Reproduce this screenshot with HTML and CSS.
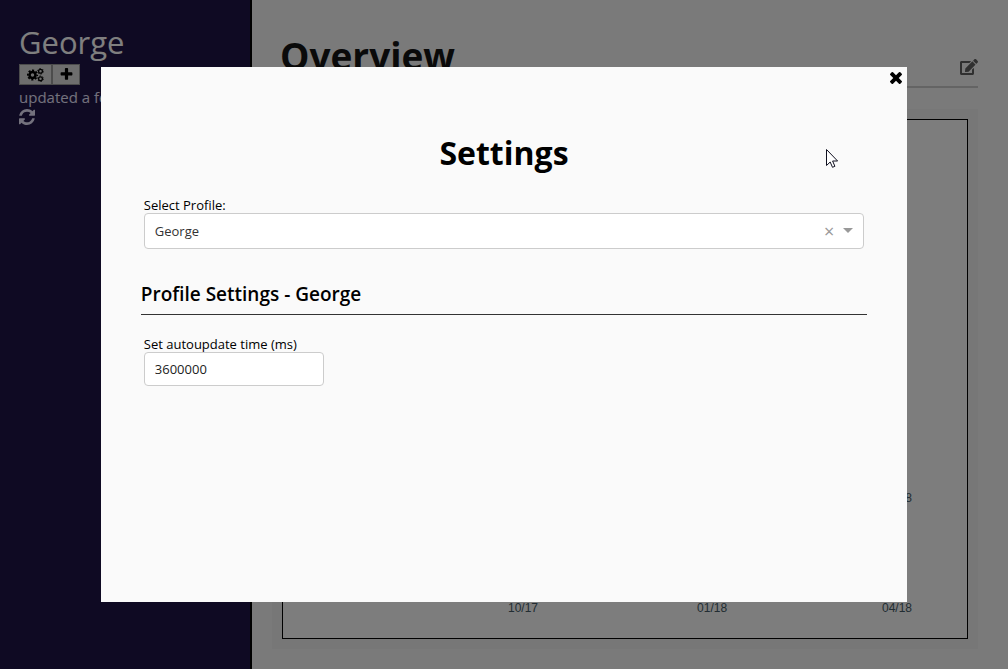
FILE: index.html
```html
<!DOCTYPE html>
<html lang="en">
<head>
<meta charset="utf-8">
<title>Overview</title>
<link rel="stylesheet" href="styles.css">
</head>
<body>
<div class="app">
  <aside class="sidebar">
    <h2 class="profile-name">George</h2>
    <div class="profile-actions">
      <button class="tool-button" type="button" aria-label="Settings">
        <svg class="icon-cogs" viewBox="0 0 34 28">
          <circle cx="11" cy="14" r="6" fill="none" stroke="currentColor" stroke-width="5"/>
          <circle cx="11" cy="14" r="9.400" fill="none" stroke="currentColor" stroke-width="3.600" stroke-dasharray="4.200 3.180" stroke-dashoffset="2.100"/>
          <circle cx="27" cy="6.500" r="3.800" fill="none" stroke="currentColor" stroke-width="2.600"/>
          <circle cx="27" cy="6.500" r="5.700" fill="none" stroke="currentColor" stroke-width="1.800" stroke-dasharray="2.900 3.070"/>
          <circle cx="27" cy="21.500" r="3.800" fill="none" stroke="currentColor" stroke-width="2.600"/>
          <circle cx="27" cy="21.500" r="5.700" fill="none" stroke="currentColor" stroke-width="1.800" stroke-dasharray="2.900 3.070"/>
        </svg>
      </button>
      <button class="tool-button tool-button-add" type="button" aria-label="Add profile">
        <svg class="icon-plus" viewBox="0 0 1792 1792"><path fill="currentColor" d="M1600 736v192q0 40-28 68t-68 28h-416v416q0 40-28 68t-68 28h-192q-40 0-68-28t-28-68v-416h-416q-40 0-68-28t-28-68v-192q0-40 28-68t68-28h416v-416q0-40 28-68t68-28h192q40 0 68 28t28 68v416h416q40 0 68 28t28 68z"/></svg>
      </button>
    </div>
    <p class="updated">updated a few seconds ago</p>
    <button class="refresh" type="button" aria-label="Refresh">
      <svg class="icon-refresh" viewBox="128 128 1536 1536"><path fill="currentColor" d="M1639 1056q0 5-1 7-64 268-268 434.500t-478 166.500q-146 0-282.500-55t-243.500-157l-129 129q-19 19-45 19t-45-19-19-45v-448q0-26 19-45t45-19h448q26 0 45 19t19 45-19 45l-137 137q71 66 161 102t187 36q134 0 250-65t186-179q11-17 53-117 8-23 30-23h192q13 0 22.500 9.500t9.500 22.500zm25-800v448q0 26-19 45t-45 19h-448q-26 0-45-19t-19-45 19-45l138-138q-148-137-349-137-134 0-250 65t-186 179q-11 17-53 117-8 23-30 23h-199q-13 0-22.500-9.500t-9.500-22.500v-7q65-268 270-434.500t480-166.500q146 0 284 55.500t245 156.500l130-129q19-19 45-19t45 19 19 45z"/></svg>
    </button>
  </aside>
  <main class="content">
    <header class="page-header">
      <h1 class="page-title">Overview</h1>
      <button class="edit" type="button" aria-label="Edit">
        <svg class="icon-edit" viewBox="0 0 576 512"><path fill="currentColor" d="M402.600 83.200l90.200 90.200c3.800 3.800 3.800 10 0 13.800L274.400 405.600l-92.800 10.300c-12.400 1.400-22.900-9.100-21.500-21.500l10.300-92.800L388.800 83.200c3.800-3.800 10-3.800 13.800 0zm162-22.900l-48.800-48.800c-15.200-15.200-39.900-15.200-55.200 0l-35.400 35.400c-3.800 3.800-3.800 10 0 13.800l90.200 90.200c3.800 3.800 10 3.800 13.800 0l35.400-35.400c15.200-15.300 15.200-40 0-55.200zM384 346.200V448H64V128h229.800c3.200 0 6.200-1.300 8.500-3.500l40-40c7.600-7.600 2.200-20.500-8.500-20.500H48C21.500 64 0 85.500 0 112v352c0 26.500 21.500 48 48 48h352c26.500 0 48-21.500 48-48V306.200c0-10.700-12.900-16-20.500-8.500l-40 40c-2.200 2.300-3.500 5.300-3.500 8.500z"/></svg>
      </button>
    </header>
    <section class="panel">
      <div class="charts">
        <div class="axis"><span>10/17</span><span>01/18</span><span>04/18</span></div>
        <div class="axis"><span>10/17</span><span>01/18</span><span>04/18</span></div>
      </div>
    </section>
  </main>
</div>

<div class="overlay">
  <div class="modal" role="dialog" aria-modal="true" aria-labelledby="modal-title">
    <button class="close" type="button" aria-label="Close">
      <svg class="icon-close" viewBox="302 302 1188 1188"><path fill="currentColor" d="M1490 1258q0 40-28 68l-136 136q-28 28-68 28t-68-28l-294-294-294 294q-28 28-68 28t-68-28l-136-136q-28-28-28-68t28-68l294-294-294-294q-28-28-28-68t28-68l136-136q28-28 68-28t68 28l294 294 294-294q28-28 68-28t68 28l136 136q28 28 28 68t-28 68l-294 294 294 294q28 28 28 68z"/></svg>
    </button>
    <h1 class="modal-title" id="modal-title">Settings</h1>
    <div class="field">
      <label for="profile">Select Profile:</label>
      <div class="select-box">
        <select id="profile"><option>George</option></select>
        <button class="clear" type="button" aria-label="Clear">×</button>
        <svg class="arrow" viewBox="0 0 10 5"><path d="M0 0h10L5 5z" fill="#999"/></svg>
      </div>
    </div>
    <h2 class="section-title">Profile Settings - George</h2>
    <div class="field">
      <label for="interval">Set autoupdate time (ms)</label>
      <input class="text-input" id="interval" type="text" value="3600000">
    </div>
  </div>
</div>
<svg class="cursor" viewBox="0 0 12 19" aria-hidden="true"><path d="M.5.500v16l3.700-3.500 2.300 5.300 2.400-1-2.300-5.300h5z" fill="#fff" stroke="#101020"/></svg>
</body>
</html>
```
FILE: styles.css
```css
* { box-sizing: border-box; }

body {
  margin: 0;
  font-family: "Open Sans", "Noto Sans", sans-serif;
  color: #141414;
  background: #f5f5f5;
}

h1, h2, p { margin: 0; }

button {
  padding: 0;
  border: 0;
  background: none;
  color: inherit;
  font: inherit;
}

svg { display: block; }

.app {
  display: flex;
  min-height: 100vh;
}

.sidebar {
  flex: 0 0 252px;
  padding: 20px 19px;
  color: #e6e2fa;
  background: #1e1446;
  border-right: 2px solid #000;
  white-space: nowrap;
  overflow: hidden;
}

.profile-name {
  font-size: 31px;
  line-height: 44px;
  font-weight: 400;
  color: #fff;
}

.profile-actions { display: flex; }

.tool-button {
  display: flex;
  align-items: center;
  justify-content: center;
  width: 33px;
  height: 21px;
  border: 1px solid #999;
  background: #ddd;
  color: #000;
}

.tool-button-add { width: 28px; }

.icon-cogs { width: 17px; height: 14px; }
.icon-plus { width: 15px; height: 15px; }

.updated {
  font-size: 15px;
  line-height: 24px;
}

.refresh { display: block; }

.icon-refresh { width: 16px; height: 16px; }

.content {
  flex: 1;
  display: flex;
  flex-direction: column;
  min-width: 0;
  padding: 30px 30px 20px 20px;
}

.page-header {
  display: flex;
  align-items: center;
  justify-content: space-between;
  padding: 0 0 4px 8px;
  border-bottom: 2px solid #c8c8c8;
  margin-bottom: 21px;
}

.page-title {
  font-size: 37px;
  line-height: 52px;
  font-weight: 700;
}

.edit {
  margin-top: 22px;
  color: #606060;
}

.icon-edit { width: 18px; height: 16px; }

.panel {
  flex: 1;
  display: flex;
  padding: 10px;
  background: #eee;
}

.charts {
  flex: 1;
  display: flex;
  flex-direction: column;
  justify-content: flex-end;
  gap: 94px;
  padding: 0 55px 22px 225px;
  background: #fafafa;
  border: 1px solid #000;
}

/* Columns follow the number of days between ticks. */
.axis {
  display: grid;
  grid-template-columns: 92fr 90fr auto;
  font: 12px/16px "Liberation Sans", Arial, sans-serif;
  color: #445a66;
}

.overlay {
  position: fixed;
  inset: 0;
  display: flex;
  align-items: center;
  justify-content: center;
  background: rgba(0, 0, 0, 0.5);
}

.modal {
  position: relative;
  width: 80%;
  height: 80%;
  padding: 60px 40px;
  background: #fafafa;
  color: #000;
}

.close {
  position: absolute;
  top: 5px;
  right: 5px;
}

.icon-close { width: 12px; height: 12px; }

.modal-title {
  margin-bottom: 18px;
  font-size: 32px;
  line-height: 52px;
  text-align: center;
}

.field {
  display: flex;
  flex-direction: column;
  align-items: flex-start;
  padding: 0 3px;
  font-size: 13px;
}

.field label { line-height: 16px; }

.select-box {
  display: flex;
  align-items: center;
  width: 100%;
  height: 36px;
  padding: 0 10px;
  border: 1px solid #ccc;
  border-radius: 4px;
  background: #fff;
}

.select-box select {
  flex: 1;
  appearance: none;
  padding: 0;
  border: 0;
  background: none;
  color: #333;
  font: inherit;
}

.clear {
  margin-right: 9px;
  color: #999;
  font-size: 18px;
  line-height: 18px;
}

.arrow { width: 10px; height: 5px; }

.section-title {
  margin: 32px 0 21px;
  padding-bottom: 6px;
  border-bottom: 1px solid #333;
  font-size: 19px;
  font-weight: 600;
  line-height: 27px;
}

.text-input {
  width: 180px;
  height: 34px;
  padding: 0 10px;
  border: 1px solid #ccc;
  border-radius: 4px;
  background: #fff;
  color: #222;
  font: inherit;
}

.cursor {
  position: fixed;
  left: 826px;
  top: 149px;
  width: 12px;
  height: 19px;
}
```
